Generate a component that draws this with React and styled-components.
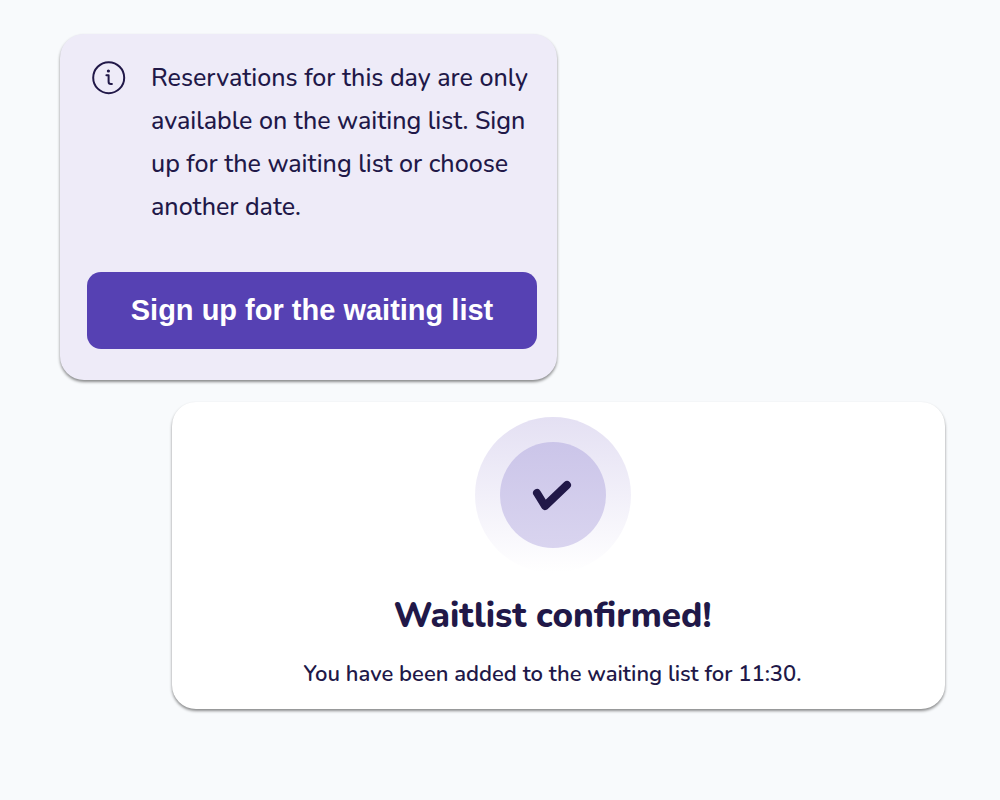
import React from "react";
import styled, { createGlobalStyle } from "styled-components";

const GlobalStyle = createGlobalStyle`
  * { box-sizing: border-box; }
  body { margin: 0; background: #f8fafc; color: #211848; font-family: Nunito, "Noto Sans", sans-serif; }
`;
const Page = styled.main`
  display: flex;
  flex-direction: column;
  gap: 22px;
  padding: 34px 55px 40px 60px;
`;
const Card = styled.section`
  border-radius: 24px;
  box-shadow: 0 2px 3px rgba(0, 0, 0, 0.45);
`;
const NoticeCard = styled(Card)`
  width: 100%;
  max-width: 497px;
  padding: 23px 20px 31px 27px;
  background: #eeebf8;
`;
const Notice = styled.div`
  display: flex;
  gap: 25px;
  padding-left: 5px;
  margin-bottom: 43px;
`;
const InfoIcon = styled.svg`
  flex: none;
  width: 34px;
  height: 34px;
  margin-top: 4px;
`;
const NoticeText = styled.p`
  margin: 0;
  font-size: 25px;
  line-height: 43px;
  font-weight: 500;
`;
const Button = styled.button`
  display: block;
  width: 100%;
  padding: 20px;
  border: 0;
  border-radius: 14px;
  background: #5641b3;
  color: #fff;
  font: bold 29px/37px "Liberation Sans", Arial, sans-serif;
  cursor: pointer;
`;
const ConfirmCard = styled(Card)`
  display: flex;
  flex-direction: column;
  align-items: center;
  margin-left: 112px;
  padding: 15px 32px 17px 20px;
  background: #fff;
  text-align: center;
`;
const Badge = styled.svg`
  width: 156px;
  height: 156px;
`;
const Title = styled.h1`
  margin: 18px 0 15px;
  font-size: 35px;
  line-height: 50px;
  font-weight: 800;
`;
const Message = styled.p`
  margin: 0;
  font-size: 22px;
  line-height: 36px;
  font-weight: 600;
`;

export default function App() {
  return (
    <Page>
      <GlobalStyle />
      <NoticeCard>
        <Notice>
          <InfoIcon viewBox="0 0 34 34" fill="none" stroke="#211848" strokeWidth="2" strokeLinecap="round" strokeLinejoin="round" aria-hidden="true">
            <circle cx="16.7" cy="16.7" r="15.5" />
            <path d="M14.4 14.3h2.2v6.500q0 2.300 2.300 2.300h1" />
            <circle cx="16.4" cy="10" r="1.6" fill="#211848" stroke="none" />
          </InfoIcon>
          <NoticeText>
            Reservations for this day are only available on the waiting list. Sign up for the waiting list or choose another date.
          </NoticeText>
        </Notice>
        <Button type="button">Sign up for the waiting list</Button>
      </NoticeCard>
      <ConfirmCard>
        <Badge viewBox="0 0 156 156" fill="none" aria-hidden="true">
          <defs>
            <linearGradient id="halo" x1="0" y1="0" x2="0" y2="1">
              <stop offset="0" stopColor="#e4e0f3" />
              <stop offset="1" stopColor="#fff" />
            </linearGradient>
            <linearGradient id="disc" x1="0" y1="0" x2="0" y2="1">
              <stop offset="0" stopColor="#cbc5e9" />
              <stop offset="1" stopColor="#d9d4ef" />
            </linearGradient>
          </defs>
          <circle cx="78" cy="78" r="78" fill="url(#halo)" />
          <circle cx="78" cy="78" r="53" fill="url(#disc)" />
          <path d="M62 76L70 89L92 68" stroke="#211848" strokeWidth="8" strokeLinecap="round" strokeLinejoin="round" />
        </Badge>
        <Title>Waitlist confirmed!</Title>
        <Message>You have been added to the waiting list for 11:30.</Message>
      </ConfirmCard>
    </Page>
  );
}
